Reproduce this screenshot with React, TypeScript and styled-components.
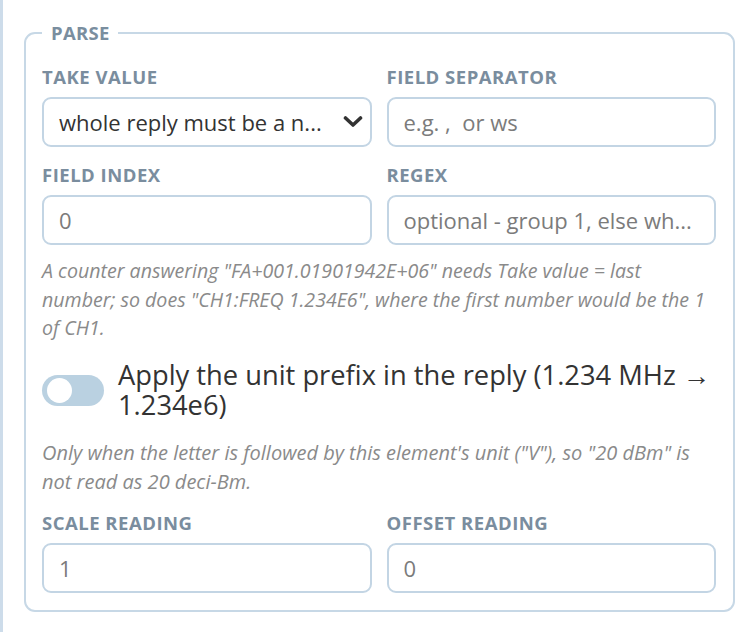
import styled, { createGlobalStyle } from "styled-components";

const Global = createGlobalStyle`
  html, body {
    margin: 0;
    padding: 0;
    background: #ffffff;
    font-family: "Open Sans", "Noto Sans", sans-serif;
  }
`;

const Panel = styled.div`
  width: 756px;
  height: 632px;
  box-sizing: border-box;
  border-left: 3px solid #cddcea;
  padding: 22px 21px 0 21px;
  overflow: hidden;
`;

const Group = styled.fieldset`
  margin: 0;
  border: 2px solid #c7d8e6;
  border-radius: 11px;
  padding: 22px 17px 17px 16px;
  min-width: 0;
`;

const Legend = styled.legend`
  padding: 0 8px 0 9px;
  margin-left: 0;
  font-size: 18.5px;
  font-weight: 700;
  letter-spacing: 0.3px;
  color: #7a8e9f;
  line-height: 22px;
`;

const Grid = styled.div`
  display: grid;
  grid-template-columns: 1fr 1fr;
  column-gap: 15px;
  row-gap: 17px;
`;

const Field = styled.div`
  display: flex;
  flex-direction: column;
  gap: 9px;
`;

const Label = styled.label`
  font-size: 18.5px;
  font-weight: 700;
  letter-spacing: 0.5px;
  line-height: 22px;
  color: #7a8d9e;
  text-transform: uppercase;
`;

const Box = styled.div<{ $muted?: boolean }>`
  height: 50px;
  box-sizing: border-box;
  border: 2px solid #c3d5e4;
  border-radius: 9px;
  padding: 0 7px 0 15px;
  display: flex;
  align-items: center;
  justify-content: space-between;
  font-size: 22px;
  color: ${(p) => (p.$muted ? "#7b7b7b" : "#333333")};
  white-space: nowrap;
  overflow: hidden;
`;

const Hint = styled.p<{ $top: number; $size: number }>`
  margin: ${(p) => p.$top}px 0 0 0;
  font-size: ${(p) => p.$size}px;
  font-style: italic;
  line-height: 28.7px;
  color: #8a8a8a;
`;

const ToggleRow = styled.div`
  display: flex;
  align-items: center;
  gap: 14px;
  margin-top: 17px;
`;

const Switch = styled.span`
  flex: none;
  width: 62px;
  height: 31px;
  border-radius: 16px;
  background: #bad1e1;
  position: relative;
  &::after {
    content: "";
    position: absolute;
    left: 5px;
    top: 3px;
    width: 25px;
    height: 25px;
    border-radius: 50%;
    background: #ffffff;
  }
`;

const ToggleText = styled.span`
  font-size: 27.3px;
  line-height: 30px;
  color: #333333;
`;

const BottomGrid = styled(Grid)`
  margin-top: 15px;
`;

const Chevron = () => (
  <svg width="20" height="14" viewBox="0 0 20 14">
    <polyline
      points="2.5,3 10,10 17.5,3"
      fill="none"
      stroke="#333"
      strokeWidth="3.6"
      strokeLinecap="round"
      strokeLinejoin="round"
    />
  </svg>
);

export default function App() {
  return (
    <>
      <Global />
      <Panel>
        <Group>
          <Legend>PARSE</Legend>
          <Grid>
            <Field>
              <Label>Take value</Label>
              <Box>
                <span>whole reply must be a n...</span>
                <Chevron />
              </Box>
            </Field>
            <Field>
              <Label>Field separator</Label>
              <Box $muted>e.g. ,&nbsp; or ws</Box>
            </Field>
            <Field>
              <Label>Field index</Label>
              <Box $muted>0</Box>
            </Field>
            <Field>
              <Label>Regex</Label>
              <Box $muted>optional - group 1, else wh...</Box>
            </Field>
          </Grid>
          <Hint $top={12} $size={19.6}>
            A counter answering "FA+001.01901942E+06" needs Take value = last
            number; so does "CH1:FREQ 1.234E6", where the first number would be
            the 1 of CH1.
          </Hint>
          <ToggleRow>
            <Switch />
            <ToggleText>
              Apply the unit prefix in the reply (1.234 MHz → 1.234e6)
            </ToggleText>
          </ToggleRow>
          <Hint $top={19} $size={20}>
            Only when the letter is followed by this element's unit ("V"), so "20
            dBm" is not read as 20 deci-Bm.
          </Hint>
          <BottomGrid>
            <Field>
              <Label>Scale reading</Label>
              <Box $muted>1</Box>
            </Field>
            <Field>
              <Label>Offset reading</Label>
              <Box $muted>0</Box>
            </Field>
          </BottomGrid>
        </Group>
      </Panel>
    </>
  );
}
